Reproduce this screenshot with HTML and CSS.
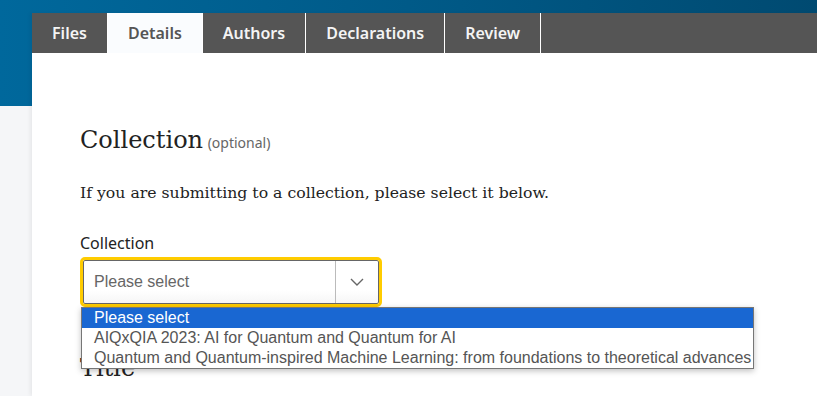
FILE: index.html
```html
<!DOCTYPE html>
<html>
<head>
<meta charset="utf-8">
<link rel="stylesheet" href="styles.css">
</head>
<body>
<div class="page">
  <div class="panel">
    <nav class="tabs">
      <div class="tab">Files</div>
      <div class="tab active">Details</div>
      <div class="tab">Authors</div>
      <div class="tab">Declarations</div>
      <div class="tab">Review</div>
    </nav>
    <div class="content">
      <h2 class="heading">Collection <span class="optional">(optional)</span></h2>
      <p class="intro">If you are submitting to a collection, please select it below.</p>
      <label class="label">Collection</label>
      <div class="select-wrap">
        <div class="select">
          <span class="select-text">Please select</span>
          <span class="select-btn">
            <svg width="14" height="8" viewBox="0 0 14 8"><path d="M1 1 L7 7 L13 1" fill="none" stroke="#666" stroke-width="1.4"/></svg>
          </span>
        </div>
        <ul class="options">
          <li class="option selected">Please select</li>
          <li class="option">AIQxQIA 2023: AI for Quantum and Quantum for AI</li>
          <li class="option">Quantum and Quantum-inspired Machine Learning: from foundations to theoretical advances</li>
        </ul>
      </div>
      <h2 class="heading next">Title</h2>
    </div>
  </div>
</div>
</body>
</html>
```

FILE: styles.css
```css
html, body {
  margin: 0;
  padding: 0;
}
body {
  width: 817px;
  height: 396px;
  overflow: hidden;
  background: #f5f6f8;
}
.page {
  height: 396px;
  background: linear-gradient(90deg, #00689c 0%, #005a88 50%, #004a71 100%) no-repeat top left / 100% 106px, #f5f6f8;
  padding-top: 13px;
  box-sizing: border-box;
}
.panel {
  margin-left: 32px;
  height: 383px;
  background: #fff;
  box-shadow: -2px 0 4px rgba(0,0,0,0.06);
}
.tabs {
  display: flex;
  height: 40px;
  background: #555;
}
.tab {
  padding: 0 20px;
  height: 40px;
  line-height: 40px;
  font-family: "Noto Sans", sans-serif;
  font-weight: 600;
  font-size: 16px;
  color: #f4f4f4;
  border-right: 1px solid #fff;
}
.tab.active {
  background: #fafcfe;
  color: #555;
}
.content {
  padding-left: 48px;
  padding-top: 1px;
}
.heading {
  font-family: "DejaVu Serif", serif;
  font-weight: normal;
  font-size: 24px;
  color: #222;
  margin: 70px 0 0 0;
  line-height: 32px;
}
.optional {
  font-family: "Noto Sans", sans-serif;
  font-size: 14px;
  color: #666;
  margin-left: -3px;
}
.intro {
  font-family: "DejaVu Serif", serif;
  font-size: 15.7px;
  color: #222;
  margin: 22px 0 0 0;
  line-height: 24px;
}
.label {
  display: block;
  font-family: "Noto Sans", sans-serif;
  font-size: 16px;
  color: #222;
  margin-top: 27px;
  line-height: 22px;
}
.select-wrap {
  position: relative;
  margin-top: 6px;
}
.select {
  display: flex;
  width: 296px;
  height: 44px;
  border: 1px solid #666;
  outline: 3px solid #ffcc00;
  outline-offset: 0;
  border-radius: 2px;
  margin-left: 3px;
  box-sizing: border-box;
  background: linear-gradient(#fff 70%, #f6f6f6);
}
.select-text {
  flex: 1;
  padding-left: 10px;
  font-family: "Liberation Sans", Arial, sans-serif;
  font-size: 16px;
  line-height: 42px;
  color: #666;
}
.select-btn {
  width: 42px;
  border-left: 1px solid #bbb;
  display: flex;
  align-items: center;
  justify-content: center;
}
.options {
  position: absolute;
  left: 1px;
  top: 47px;
  margin: 0;
  padding: 0;
  list-style: none;
  background: #fff;
  border: 1px solid #767676;
  box-shadow: 0 2px 6px rgba(0,0,0,0.25);
  z-index: 2;
}
.option {
  font-family: "Liberation Sans", Arial, sans-serif;
  font-size: 16px;
  line-height: 20px;
  padding: 0 2px 0 12px;
  color: #555;
  white-space: nowrap;
}
.option.selected {
  background: #1967d2;
  color: #fff;
}
.heading.next {
  margin-top: 48px;
}
```
